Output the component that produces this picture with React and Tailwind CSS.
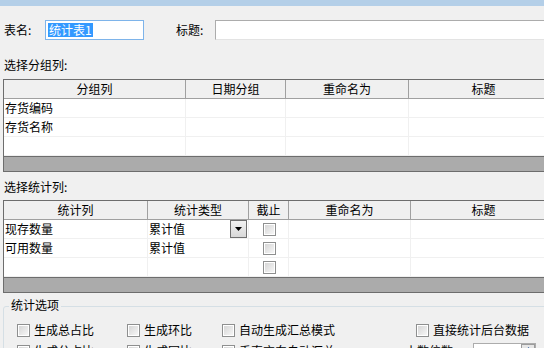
const font = { fontFamily: '"Noto Sans CJK SC", "Noto Sans", sans-serif' };

function CheckBox() {
  return (
    <div className="w-[13px] h-[13px] border border-[#8e8f8f] bg-white p-[1px] shrink-0">
      <div className="w-full h-full bg-gradient-to-br from-[#d6d6d6] to-[#f6f6f6]" />
    </div>
  );
}

function DropButton() {
  return (
    <div className="w-[17px] h-[18px] border border-[#707070] bg-gradient-to-b from-[#f2f2f2] to-[#d8d8d8] flex items-center justify-center">
      <svg width="7" height="4" viewBox="0 0 7 4">
        <path d="M0 0H7L3.5 4Z" fill="#000" />
      </svg>
    </div>
  );
}

function Grid({ cols, rows }) {
  return (
    <div className="ml-[3px] border-l border-t border-[#6d6d6d] w-[620px]">
      <div className="flex h-[19px] bg-[#f0f0f0] border-b border-[#a0a0a0]">
        {cols.map((c, i) => (
          <div
            key={i}
            style={{ width: c.w }}
            className="border-r border-[#a0a0a0] flex items-center justify-center text-[12px] leading-none shrink-0"
          >
            {c.title}
          </div>
        ))}
      </div>
      {rows.map((r, ri) => (
        <div key={ri} className="flex h-[19px] bg-white">
          {cols.map((c, ci) => (
            <div
              key={ci}
              style={{ width: c.w }}
              className="border-r border-b border-[#f0f0f0] flex items-center text-[12px] leading-none pl-[1px] shrink-0"
            >
              {r[ci]}
            </div>
          ))}
        </div>
      ))}
      <div className="h-[16px] bg-[#ababab] border-t border-b border-[#6d6d6d]" />
    </div>
  );
}

function Option({ label, x }) {
  return (
    <div style={{ left: x - 4 }} className="absolute top-0 flex items-center gap-[4px]">
      <CheckBox />
      <span className="text-[12px] leading-[14px] whitespace-nowrap">{label}</span>
    </div>
  );
}

export default function App() {
  const groupCols = [
    { title: '分组列', w: 182 },
    { title: '日期分组', w: 100 },
    { title: '重命名为', w: 123 },
    { title: '标题', w: 150 },
  ];
  const groupRows = [['存货编码'], ['存货名称'], []];

  const statCols = [
    { title: '统计列', w: 144 },
    { title: '统计类型', w: 101 },
    { title: '截止', w: 40 },
    { title: '重命名为', w: 122 },
    { title: '标题', w: 146 },
  ];
  const chk = (
    <div className="w-full flex justify-center">
      <CheckBox />
    </div>
  );
  const statRows = [
    [
      '现存数量',
      <div className="w-full flex items-center justify-between">
        <span>累计值</span>
        <div className="mr-[1px]">
          <DropButton />
        </div>
      </div>,
      chk,
    ],
    ['可用数量', '累计值', chk],
    ['', '', chk],
  ];

  const opts1 = [
    { label: '生成总占比', x: 17 },
    { label: '生成环比', x: 127 },
    { label: '自动生成汇总模式', x: 222 },
    { label: '直接统计后台数据', x: 416 },
  ];
  const opts2 = [
    { label: '生成分占比', x: 17 },
    { label: '生成同比', x: 127 },
    { label: '垂直方向自动汇总', x: 222 },
  ];

  return (
    <div style={font} className="w-[544px] h-[348px] overflow-hidden bg-[#f0f0f0] text-black flex flex-col">
      <div className="h-[6px] bg-[#b4cfe8] shrink-0" />

      <div className="mt-[14px] h-[20px] flex items-center shrink-0">
        <span className="ml-[4px] w-[41px] text-[12px]">表名:</span>
        <div className="w-[99px] h-[20px] border border-[#7eb4ea] bg-white flex items-center pl-[2px]">
          <span className="bg-[#3399ff] text-white text-[12px] leading-[14px] px-[1px]">统计表1</span>
        </div>
        <span className="ml-[32px] w-[39px] text-[12px]">标题:</span>
        <div className="flex-1 h-[20px] border-t border-l border-[#acacac] border-b-[#e3e3e3] border-b bg-white" />
      </div>

      <div className="h-[39px] pt-[17px] shrink-0">
        <div className="ml-[4px] text-[12px] leading-[16px]">选择分组列:</div>
      </div>

      <Grid cols={groupCols} rows={groupRows} />

      <div className="h-[28px] pt-[7px] shrink-0">
        <div className="ml-[4px] text-[12px] leading-[16px]">选择统计列:</div>
      </div>

      <Grid cols={statCols} rows={statRows} />

      <div className="relative mt-[13px] ml-[3px] w-[600px] h-[60px] border border-[#d5dfe5] rounded-[3px] shrink-0">
        <span className="absolute -top-[10px] left-[5px] px-[2px] bg-[#f0f0f0] text-[12px] leading-[16px]">
          统计选项
        </span>
        <div className="relative h-[21px] mt-[16px]">
          {opts1.map((o) => (
            <Option key={o.label} {...o} />
          ))}
        </div>
        <div className="relative h-[20px]">
          {opts2.map((o) => (
            <Option key={o.label} {...o} />
          ))}
          <span className="absolute left-[401px] top-0 text-[12px] leading-[14px]">小数位数</span>
          <div className="absolute left-[469px] -top-[1px] w-[63px] h-[20px] border border-[#acacac] bg-white flex">
            <span className="text-[12px] pl-[2px] leading-[16px] flex-1">1</span>
            <div className="w-[14px] h-[9px] border border-[#9c9c9c] bg-[#e6e6e6] flex items-center justify-center">
              <svg width="5" height="3" viewBox="0 0 5 3">
                <path d="M0 3H5L2.5 0Z" fill="#2a5aa0" />
              </svg>
            </div>
          </div>
        </div>
      </div>
    </div>
  );
}
